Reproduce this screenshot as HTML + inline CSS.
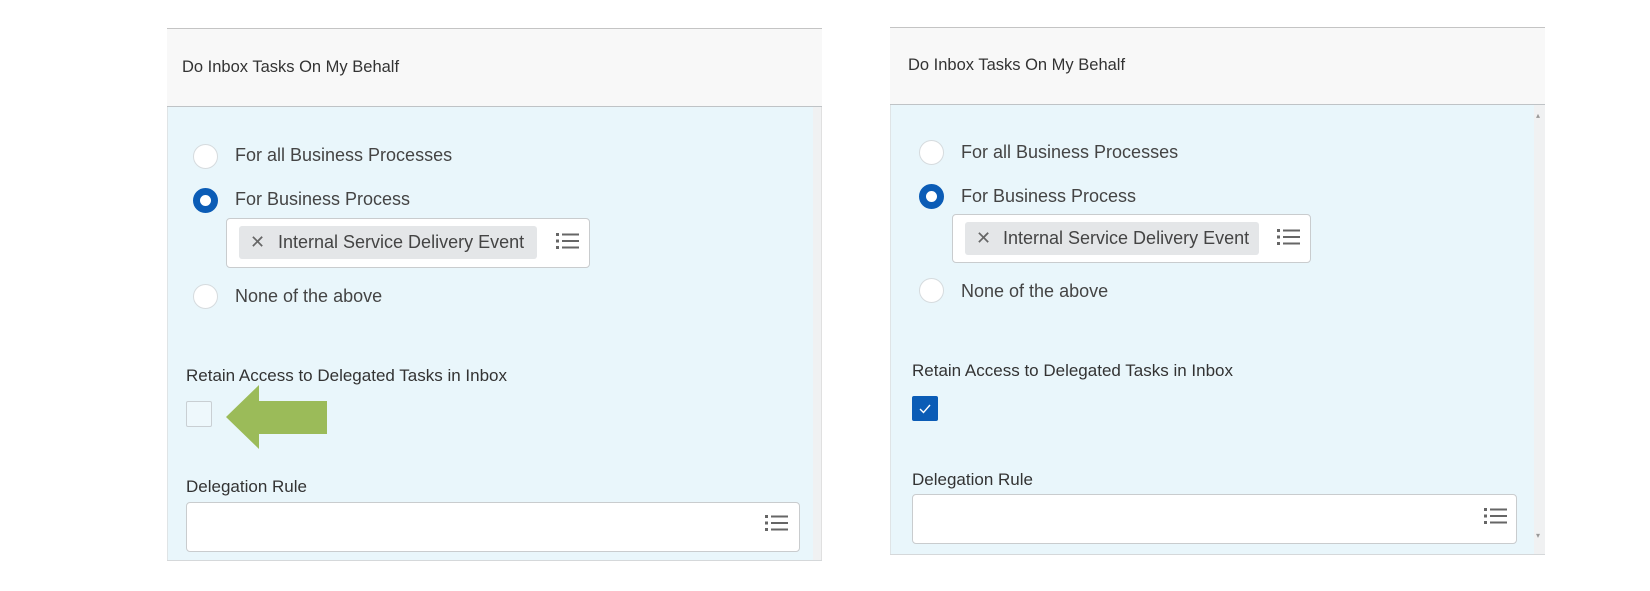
<!DOCTYPE html>
<html><head><meta charset="utf-8"><style>
*{box-sizing:border-box;margin:0;padding:0}
body{width:1650px;height:591px;background:#fff;position:relative;overflow:hidden;font-family:"Liberation Sans",Arial,sans-serif;color:#333}
.a{position:absolute}
.hdr{background:#f8f8f8;border-top:1px solid #c4c4c4;border-bottom:1px solid #bfc3c6}
.body{background:#e9f6fb}
.t{position:absolute;white-space:nowrap;line-height:1}
.lbl{font-size:18px;color:#444}
.sm{font-size:17px;color:#333}
.rad{position:absolute;width:25px;height:25px;border-radius:50%;background:#fff;border:1px solid #d6dbde}
.rad.on{border:7px solid #0b5cb6;background:#fff}
.box{position:absolute;background:#fff;border:1px solid #c9ccce;border-radius:4px}
.chip{position:absolute;background:#e4e6e8;border-radius:3px}
.x{position:absolute;font-size:18px;color:#666;line-height:1}
.strip{background:#f0f1f2}
</style></head><body>

<!-- LEFT PANEL -->
<div class="a hdr" style="left:167px;top:28px;width:655px;height:79px"></div>
<div class="a body" style="left:167px;top:107px;width:646px;height:454px;border-left:1px solid #dfe4e6"></div>
<div class="a strip" style="left:813px;top:107px;width:9px;height:454px;border-right:1px solid #e0e0e0"></div>
<div class="a" style="left:167px;top:560px;width:655px;height:1px;background:#d5d8da"></div>
<div class="t sm" style="left:182px;top:59px;font-size:16.5px">Do Inbox Tasks On My Behalf</div>

<div class="rad" style="left:193px;top:144px"></div>
<div class="t lbl" style="left:235px;top:146px">For all Business Processes</div>
<div class="rad on" style="left:193px;top:188px"></div>
<div class="t lbl" style="left:235px;top:190px">For Business Process</div>
<div class="box" style="left:226px;top:218px;width:364px;height:50px"></div>
<div class="chip" style="left:239px;top:226px;width:298px;height:33px"></div>
<div class="x" style="left:250px;top:233px">✕</div>
<div class="t lbl" style="left:278px;top:233px">Internal Service Delivery Event</div>
<svg class="a" style="left:556px;top:232px" width="23" height="18" viewBox="0 0 23 18"><g fill="#666"><rect x="0" y="1" width="3" height="3"/><rect x="0" y="7.5" width="3" height="3"/><rect x="0" y="14" width="3" height="3"/><rect x="6" y="1.5" width="17" height="2"/><rect x="6" y="8" width="17" height="2"/><rect x="6" y="14.5" width="17" height="2"/></g></svg>
<div class="rad" style="left:193px;top:284px"></div>
<div class="t lbl" style="left:235px;top:287px">None of the above</div>

<div class="t sm" style="left:186px;top:367px">Retain Access to Delegated Tasks in Inbox</div>
<div class="a" style="left:186px;top:401px;width:26px;height:26px;border:1px solid #c9cfd3;border-radius:2px;background:#eef8fc"></div>
<svg class="a" style="left:226px;top:385px" width="102" height="65" viewBox="0 0 102 65"><polygon points="0,32 33,0 33,16 101,16 101,49 33,49 33,64" fill="#9bbb59"/></svg>

<div class="t sm" style="left:186px;top:478px">Delegation Rule</div>
<div class="box" style="left:186px;top:502px;width:614px;height:50px"></div>
<svg class="a" style="left:765px;top:514px" width="23" height="18" viewBox="0 0 23 18"><g fill="#666"><rect x="0" y="1" width="3" height="3"/><rect x="0" y="7.5" width="3" height="3"/><rect x="0" y="14" width="3" height="3"/><rect x="6" y="1.5" width="17" height="2"/><rect x="6" y="8" width="17" height="2"/><rect x="6" y="14.5" width="17" height="2"/></g></svg>

<!-- RIGHT PANEL -->
<div class="a hdr" style="left:890px;top:27px;width:655px;height:78px"></div>
<div class="a body" style="left:890px;top:105px;width:644px;height:450px;border-left:1px solid #dfe4e6"></div>
<div class="a strip" style="left:1534px;top:105px;width:11px;height:450px"></div>
<div class="t" style="left:1536px;top:112px;font-size:8px;color:#999">▴</div>
<div class="t" style="left:1536px;top:532px;font-size:8px;color:#999">▾</div>
<div class="a" style="left:890px;top:554px;width:655px;height:1px;background:#d5d8da"></div>
<div class="t sm" style="left:908px;top:57px;font-size:16.5px">Do Inbox Tasks On My Behalf</div>

<div class="rad" style="left:919px;top:140px"></div>
<div class="t lbl" style="left:961px;top:143px">For all Business Processes</div>
<div class="rad on" style="left:919px;top:184px"></div>
<div class="t lbl" style="left:961px;top:187px">For Business Process</div>
<div class="box" style="left:952px;top:214px;width:359px;height:49px"></div>
<div class="chip" style="left:965px;top:222px;width:294px;height:33px"></div>
<div class="x" style="left:976px;top:229px">✕</div>
<div class="t lbl" style="left:1003px;top:229px">Internal Service Delivery Event</div>
<svg class="a" style="left:1277px;top:228px" width="23" height="18" viewBox="0 0 23 18"><g fill="#666"><rect x="0" y="1" width="3" height="3"/><rect x="0" y="7.5" width="3" height="3"/><rect x="0" y="14" width="3" height="3"/><rect x="6" y="1.5" width="17" height="2"/><rect x="6" y="8" width="17" height="2"/><rect x="6" y="14.5" width="17" height="2"/></g></svg>
<div class="rad" style="left:919px;top:278px"></div>
<div class="t lbl" style="left:961px;top:282px">None of the above</div>

<div class="t sm" style="left:912px;top:362px">Retain Access to Delegated Tasks in Inbox</div>
<div class="a" style="left:912px;top:396px;width:26px;height:25px;background:#0b5cb6;border-radius:2px"></div>
<svg class="a" style="left:916px;top:400px" width="18" height="17" viewBox="0 0 18 17"><path d="M4 9 L7.5 12.5 L14 5" stroke="#fff" stroke-width="1.4" fill="none"/></svg>

<div class="t sm" style="left:912px;top:471px">Delegation Rule</div>
<div class="box" style="left:912px;top:494px;width:605px;height:50px"></div>
<svg class="a" style="left:1484px;top:507px" width="23" height="18" viewBox="0 0 23 18"><g fill="#666"><rect x="0" y="1" width="3" height="3"/><rect x="0" y="7.5" width="3" height="3"/><rect x="0" y="14" width="3" height="3"/><rect x="6" y="1.5" width="17" height="2"/><rect x="6" y="8" width="17" height="2"/><rect x="6" y="14.5" width="17" height="2"/></g></svg>

</body></html>
